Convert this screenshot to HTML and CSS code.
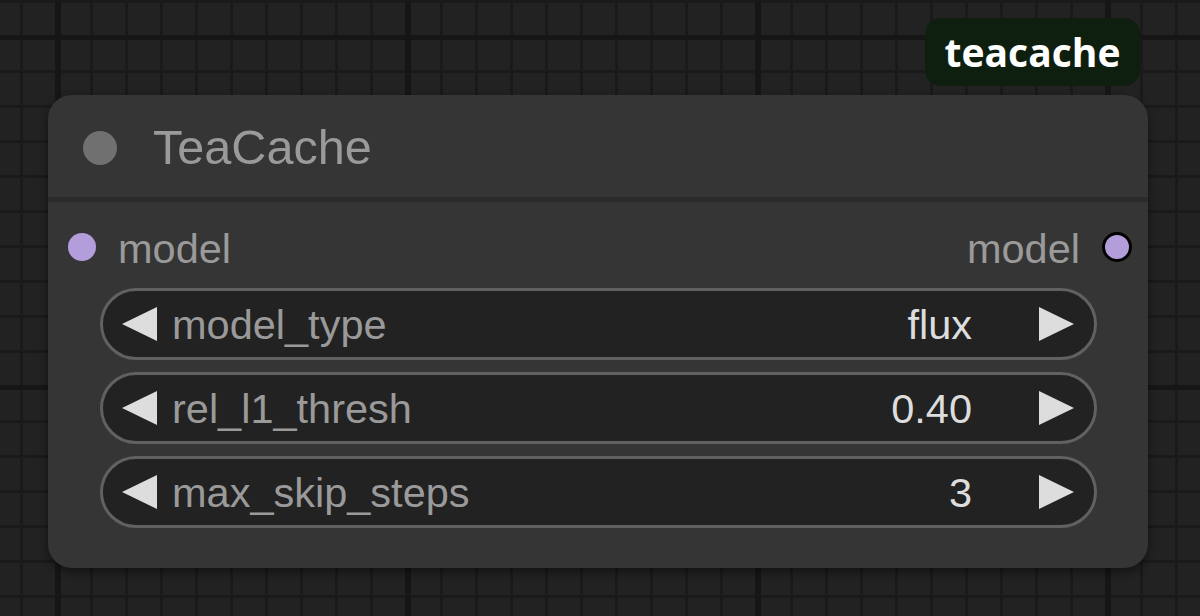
FILE: index.html
```html
<!DOCTYPE html>
<html>
<head>
<meta charset="utf-8">
<link rel="stylesheet" href="styles.css">
</head>
<body>
<div class="canvas">
  <div class="badge">teacache</div>
  <div class="node">
    <div class="node-title">
      <span class="title-dot"></span>
      <span class="title-text">TeaCache</span>
    </div>
    <div class="node-body">
      <div class="slots">
        <div class="slot slot-in"><span class="slot-dot"></span><span class="slot-label">model</span></div>
        <div class="slot slot-out"><span class="slot-label">model</span><span class="slot-dot slot-dot-out"></span></div>
      </div>
      <div class="widgets">
        <div class="widget">
          <span class="arrow arrow-left"></span>
          <span class="w-label">model_type</span>
          <span class="w-value">flux</span>
          <span class="arrow arrow-right"></span>
        </div>
        <div class="widget">
          <span class="arrow arrow-left"></span>
          <span class="w-label">rel_l1_thresh</span>
          <span class="w-value">0.40</span>
          <span class="arrow arrow-right"></span>
        </div>
        <div class="widget">
          <span class="arrow arrow-left"></span>
          <span class="w-label">max_skip_steps</span>
          <span class="w-value">3</span>
          <span class="arrow arrow-right"></span>
        </div>
      </div>
    </div>
  </div>
</div>
</body>
</html>
```
FILE: styles.css
```css
html, body {
  margin: 0;
  padding: 0;
  width: 1200px;
  height: 616px;
  overflow: hidden;
}
body {
  background-color: #222222;
  background-image:
    linear-gradient(90deg, #161616 6px, transparent 6px),
    linear-gradient(180deg, #161616 5px, transparent 5px),
    linear-gradient(90deg, #1a1a1a 3px, transparent 3px),
    linear-gradient(180deg, #1a1a1a 3px, transparent 3px);
  background-size: 350px 100%, 100% 350px, 35px 100%, 100% 35px;
  background-position: 55px 0, 0 35px, 20px 0, 0 0;
  font-family: "Liberation Sans", Arial, sans-serif;
}
.canvas {
  position: relative;
  width: 1200px;
  height: 616px;
}
.badge {
  position: absolute;
  left: 925px;
  top: 18px;
  width: 215px;
  height: 68px;
  box-sizing: border-box;
  border-radius: 16px;
  background: #0f1f0f;
  color: #ffffff;
  font-family: "Open Sans", "Noto Sans", sans-serif;
  font-weight: 700;
  font-size: 39px;
  display: flex;
  align-items: center;
  justify-content: center;
  line-height: 1;
  padding-bottom: 2px;
}
.node {
  position: absolute;
  left: 48px;
  top: 95px;
  width: 1100px;
  height: 473px;
  background: #353535;
  border-radius: 24px;
  box-shadow: 0 4px 10px rgba(0, 0, 0, 0.45);
  display: flex;
  flex-direction: column;
}
.node-title {
  box-sizing: border-box;
  border-bottom: 5px solid #2b2b2b;
  display: flex;
  align-items: center;
  padding-left: 35px;
  flex: none;
  height: 107px;
}
.title-dot {
  width: 34px;
  height: 34px;
  border-radius: 50%;
  background: #707070;
  flex: none;
  margin-top: 3px;
}
.title-text {
  margin-left: 36px;
  font-size: 48.6px;
  color: #9a9a9a;
  line-height: 1;
  margin-top: 2px;
}
.node-body {
  display: flex;
  flex-direction: column;
  padding: 0 51px 0 52px;
}
.slots {
  height: 86px;
  display: flex;
  align-items: center;
  justify-content: space-between;
  margin: 0 -35px 0 -32px;
  padding-top: 4px;
  box-sizing: border-box;
}
.slot {
  display: flex;
  align-items: center;
}
.slot-dot {
  width: 28px;
  height: 28px;
  border-radius: 50%;
  background: #b39ddb;
  flex: none;
}
.slot-dot-out {
  width: 24px;
  height: 24px;
  border: 3px solid #000000;
}
.slot-label {
  font-size: 41.5px;
  color: #9a9a9a;
  line-height: 1;
}
.slot-in .slot-label {
  margin-left: 22px;
  margin-top: 4px;
}
.slot-out .slot-label {
  margin-right: 22px;
  margin-top: 4px;
}
.widgets {
  display: flex;
  flex-direction: column;
  gap: 12px;
}
.widget {
  height: 72px;
  box-sizing: border-box;
  border: 3px solid #616161;
  border-radius: 36px;
  background: #222222;
  display: flex;
  align-items: center;
  padding: 0 20px 0 19px;
  font-size: 41.5px;
  line-height: 1;
}
.arrow {
  width: 0;
  height: 0;
  border-top: 17px solid transparent;
  border-bottom: 17px solid transparent;
  flex: none;
}
.arrow-left {
  border-right: 35px solid #dddddd;
}
.arrow-right {
  border-left: 35px solid #dddddd;
  margin-left: 67px;
}
.w-label {
  margin-left: 15px;
  color: #9a9a9a;
  flex: 1;
  padding-top: 2px;
}
.w-value {
  color: #dddddd;
  padding-top: 2px;
}
```
